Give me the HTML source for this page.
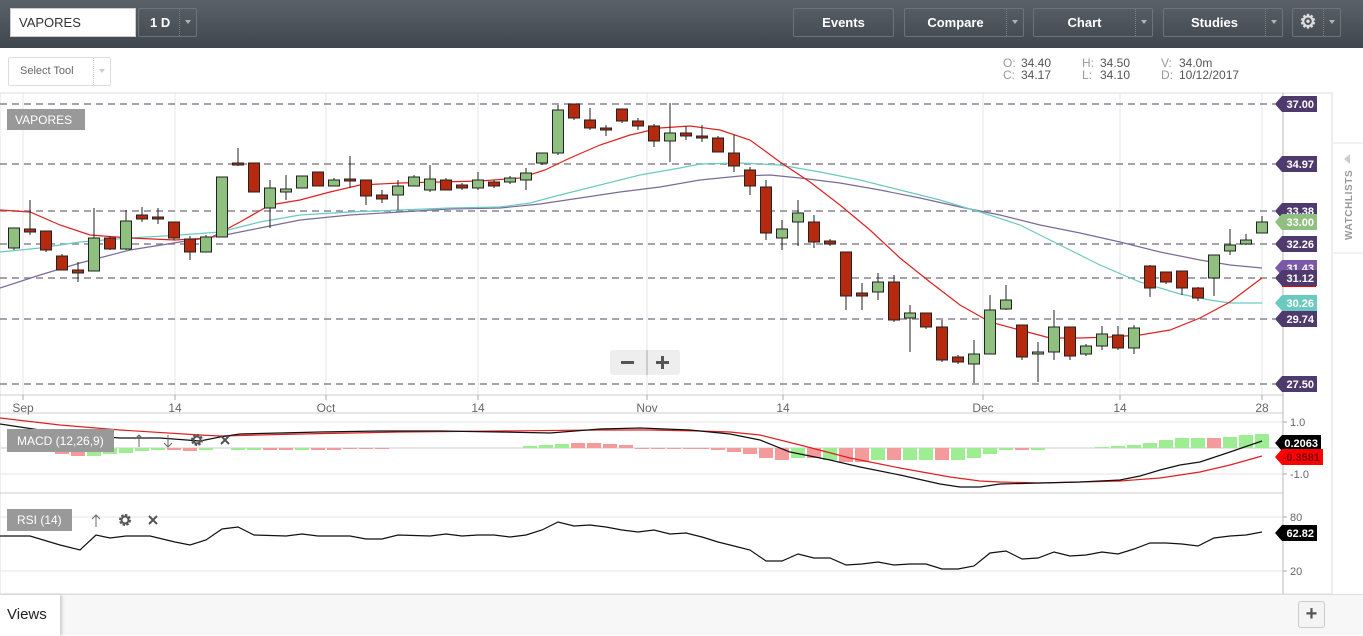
<!DOCTYPE html>
<html><head><meta charset="utf-8">
<style>
*{margin:0;padding:0;box-sizing:border-box}
body{width:1363px;height:635px;overflow:hidden;background:#fff;font-family:"Liberation Sans",sans-serif;position:relative}
.hdr{position:absolute;left:0;top:0;width:1363px;height:48px;background:linear-gradient(#5b6169,#40464d)}
.btn{position:absolute;top:8px;height:29px;border:1px solid #6d737a;border-radius:2px;color:#fff;font-weight:bold;font-size:13px;line-height:27px;text-align:center}
.btn .dd{position:absolute;right:0;top:0;width:17px;height:27px;border-left:1px dotted #7a8088}
.btn .dd:after{content:"";position:absolute;left:5px;top:11px;border-left:3px solid transparent;border-right:3px solid transparent;border-top:4px solid #b0b4b8}
.inp{position:absolute;left:10px;top:8px;width:126px;height:29px;background:#fff;border:1px solid #ccc;font-size:13px;line-height:27px;padding-left:8px;color:#333}
.sel{position:absolute;left:8px;top:57px;width:103px;height:29px;border:1px solid #ddd;border-radius:2px;font-size:11px;color:#666;line-height:27px;padding-left:11px}
.sel .dd{position:absolute;right:0;top:0;width:17px;height:27px;border-left:1px dotted #ccc}
.sel .dd:after{content:"";position:absolute;left:5px;top:11px;border-left:3px solid transparent;border-right:3px solid transparent;border-top:4px solid #ccc}
.ohlc{position:absolute;top:57px;font-size:12px;color:#555;line-height:12px}
.ohlc b{font-weight:normal;color:#999;display:inline-block;width:18px}
.views{position:absolute;left:0;top:594px;width:1363px;height:41px;background:#f7f7f7;border-top:1px solid #ddd}
.vtab{position:absolute;left:0;top:0;width:60px;height:41px;background:#fff;box-shadow:2px 0 3px #ccc;font-size:15px;line-height:40px;padding-left:7px;color:#222}
.plus{position:absolute;left:1298px;top:6px;width:27px;height:27px;border:1px solid #ccc;border-radius:3px;background:#f4f4f4;text-align:center;font-size:20px;line-height:24px;color:#555;font-weight:bold}
</style></head><body>
<div class="hdr">
<div class="inp">VAPORES</div>
<div class="btn" style="left:138px;width:59px;text-align:left;padding-left:11px">1 D<div class="dd"></div></div>
<div class="btn" style="left:793px;width:101px">Events</div>
<div class="btn" style="left:904px;width:120px;padding-right:17px">Compare<div class="dd"></div></div>
<div class="btn" style="left:1033px;width:120px;padding-right:17px">Chart<div class="dd"></div></div>
<div class="btn" style="left:1163px;width:120px;padding-right:17px">Studies<div class="dd"></div></div>
<div class="btn" style="left:1292px;width:49px;padding-right:17px;font-size:19px;color:#ddd">⚙<div class="dd"></div></div>
</div>
<div class="sel">Select Tool<div class="dd"></div></div>
<div class="ohlc" style="left:1003px"><b>O:</b>34.40<br><b>C:</b>34.17</div>
<div class="ohlc" style="left:1082px"><b>H:</b>34.50<br><b>L:</b>34.10</div>
<div class="ohlc" style="left:1161px"><b>V:</b>34.0m<br><b>D:</b>10/12/2017</div>
<svg id="c" width="1363" height="635" style="position:absolute;left:0;top:0" font-family="Liberation Sans, sans-serif"></svg>
<div class="views"><div class="vtab">Views</div><div class="plus">+</div></div>
<script>
var s='';
function P(a){return a.map(function(p){return p[0]+','+p[1]}).join(' ')}
s+='<rect x="0" y="93" width="1332" height="501" fill="#fff" stroke="#ddd"/>';
s+='<line x1="1333" y1="143" x2="1363" y2="143" stroke="#e5e5e5"/><line x1="1333" y1="253" x2="1363" y2="253" stroke="#e5e5e5"/>';
s+='<text transform="translate(1352,240) rotate(-90)" font-size="10" font-weight="bold" fill="#999" letter-spacing="0.6">WATCHLISTS</text>';
s+='<path d="M1344 159 L1350 154 L1350 164 Z" fill="#ccc"/>';
[23,175,326,478,647,783,983,1120,1262].forEach(function(x){s+='<line x1="'+x+'" y1="93" x2="'+x+'" y2="396" stroke="#e4e4e4"/>'});
[[0,395,1283],[0,413,1283],[0,422,1283],[0,474,1283],[0,493,1283],[0,517,1283],[0,571,1283]].forEach(function(l){s+='<line x1="'+l[0]+'" y1="'+l[1]+'" x2="'+l[2]+'" y2="'+l[1]+'" stroke="'+(l[1]==395||l[1]==493||l[1]==413?'#ccc':'#e6e6e6')+'"/>'});
s+='<line x1="0" y1="448" x2="1283" y2="448" stroke="#e6e6e6" stroke-width="2"/>';
s+='<line x1="1283" y1="93" x2="1283" y2="594" stroke="#bbb"/>';
[104,164,211,244,278,319,384].forEach(function(y){s+='<line x1="0" y1="'+y+'" x2="1275" y2="'+y+'" stroke="#8a8494" stroke-width="1.5" stroke-dasharray="7,5"/>'});
s+='<polyline fill="none" stroke="#7a6a9a" stroke-width="1.2" points="'+P([[0,288],[40,275],[80,263],[130,250],[180,242],[220,236],[260,228],[300,220],[350,215],[400,212],[450,209],[500,208],[540,204],[580,198],[620,192],[660,187],[700,180],[740,176],[770,175],[800,178],[840,183],[880,190],[920,198],[960,207],[1000,215],[1040,225],[1080,233],[1120,242],[1160,252],[1200,260],[1230,265],[1262,268]])+'"/>';
s+='<polyline fill="none" stroke="#6cc9c0" stroke-width="1.2" points="'+P([[0,252],[40,248],[80,242],[130,238],[180,235],[220,232],[260,222],[300,215],[350,212],[400,210],[450,208],[500,207],[530,203],[560,195],[600,185],[640,175],[680,168],[700,164],[740,163],[780,165],[820,172],[860,180],[900,190],[940,200],[980,212],[1020,225],[1060,245],[1100,265],[1140,282],[1180,294],[1210,300],[1230,303],[1262,303]])+'"/>';
s+='<polyline fill="none" stroke="#e02020" stroke-width="1.2" points="'+P([[0,210],[30,212],[60,225],[90,235],[130,238],[175,240],[210,238],[240,222],[270,205],[300,200],[330,192],[360,185],[400,183],[440,182],[480,181],[520,178],[545,170],[570,158],[600,145],[630,135],[660,128],[690,126],[720,130],[750,140],[780,162],[810,182],[840,205],[870,230],[900,258],[930,282],[960,305],[990,322],[1020,330],[1050,338],[1080,338],[1110,337],[1140,335],[1170,330],[1200,318],[1230,302],[1262,278]])+'"/>';
var C=[[14,228,248,228,250,1],[30,229,232,200,235,0],[46,231,250,231,252,0],[62,256,270,254,270,0],[78,270,273,262,282,0],[94,238,271,208,271,1],[110,238,249,236,250,0],[126,221,249,210,250,1],[142,215,219,207,222,0],[158,217,219,208,224,0],[174,222,238,222,240,0],[190,239,252,236,260,0],[206,237,252,235,252,1],[222,177,237,177,237,1],[238,163,165,148,166,0],[254,163,192,163,192,0],[270,188,208,180,228,1],[286,189,192,175,200,1],[302,176,188,176,188,1],[318,172,186,172,186,0],[334,180,186,178,186,1],[350,179,181,156,188,0],[366,180,196,180,205,0],[382,195,199,190,203,0],[398,186,195,180,210,1],[414,177,186,175,186,1],[430,179,190,165,192,1],[446,180,190,178,190,0],[462,185,188,183,190,0],[478,180,188,172,190,1],[494,182,186,180,188,0],[510,178,182,176,184,1],[526,173,180,168,190,1],[542,153,163,153,165,1],[558,110,153,105,155,1],[574,104,118,104,120,0],[590,120,128,108,130,0],[606,128,129,125,136,0],[622,109,121,109,123,0],[638,121,126,118,130,0],[654,126,141,124,147,0],[670,133,141,103,162,1],[686,133,136,126,140,0],[702,136,138,125,142,0],[718,138,152,136,152,0],[734,153,166,135,172,0],[750,170,186,167,195,0],[766,187,233,180,240,0],[782,229,238,220,250,1],[798,213,222,200,246,1],[814,222,242,215,248,0],[830,241,244,239,246,0],[846,252,296,252,310,0],[862,293,296,283,310,0],[878,282,292,273,300,1],[894,282,320,275,322,0],[910,313,318,305,352,1],[926,313,327,313,329,0],[942,327,360,320,362,0],[958,357,362,355,364,0],[974,354,364,340,383,1],[990,310,354,295,354,1],[1006,300,309,285,310,1],[1022,325,357,325,360,0],[1038,352,354,342,382,1],[1054,327,352,310,360,1],[1070,327,356,327,360,0],[1086,346,354,344,356,1],[1102,334,346,326,350,1],[1118,335,348,326,350,0],[1134,328,348,325,354,1],[1150,266,288,265,297,0],[1166,272,282,272,284,0],[1182,271,288,271,295,0],[1198,288,298,287,301,0],[1214,255,278,255,296,1],[1230,245,251,229,255,1],[1246,240,244,234,245,1],[1262,222,233,216,233,1]];
C.forEach(function(c){s+='<line x1="'+c[0]+'" y1="'+c[3]+'" x2="'+c[0]+'" y2="'+c[4]+'" stroke="#222"/>';s+='<rect x="'+(c[0]-5.5)+'" y="'+c[1]+'" width="11" height="'+Math.max(2,c[2]-c[1])+'" fill="'+(c[5]?'#8fc07f':'#b52a0e')+'" stroke="#222"/>'});
var H=[[30,-1,0],[46,-4,0],[62,-6,0],[78,-8,0],[94,-8,1],[110,-6,1],[126,-5,1],[142,-3,1],[158,-2,1],[174,-2,0],[190,-3,0],[206,-2,1],[238,-2,1],[254,-2,1],[270,-2,0],[286,-2,0],[302,-2,1],[318,-2,0],[334,-2,0],[350,-1,0],[366,-1,0],[382,-1,0],[530,2,1],[546,3,1],[562,4,1],[578,5,0],[594,5,0],[610,4,0],[626,3,0],[642,-1,0],[658,-1,0],[674,-1,0],[690,-1,0],[702,-1,0],[718,-2,0],[734,-4,0],[750,-6,0],[766,-10,0],[782,-12,0],[798,-10,1],[814,-10,0],[830,-12,1],[846,-14,0],[862,-14,0],[878,-12,1],[894,-12,0],[910,-12,1],[926,-12,1],[942,-12,0],[958,-12,1],[974,-10,1],[990,-6,1],[1006,-2,1],[1022,-2,0],[1038,-2,1],[1102,1,1],[1118,2,1],[1134,3,1],[1150,5,1],[1166,8,1],[1182,10,1],[1198,10,1],[1214,10,0],[1230,11,1],[1246,13,1],[1262,14,1]];
H.forEach(function(h){var y=h[1]>0?448-h[1]:448;s+='<rect x="'+(h[0]-7)+'" y="'+y+'" width="14" height="'+Math.abs(h[1])+'" fill="'+(h[2]?'#9ded93':'#f59a9a')+'"/>'});
s+='<polyline fill="none" stroke="#e02020" stroke-width="1.2" points="'+P([[0,418],[60,425],[120,430],[200,435],[220,436],[300,434],[400,432],[500,431],[600,430],[650,430],[700,431],[730,432],[760,435],[800,445],[850,458],[900,468],[950,477],[980,481],[1000,482],[1040,483],[1080,482],[1120,481],[1160,478],[1200,472],[1230,465],[1262,456]])+'"/>';
s+='<polyline fill="none" stroke="#111" stroke-width="1.2" points="'+P([[0,424],[40,430],[80,435],[120,438],[160,438],[200,441],[220,437],[240,434],[280,433],[320,432],[380,431],[440,431],[500,432],[550,433],[600,429],[640,428],[690,430],[730,434],[760,440],[790,452],[830,460],[860,467],[900,475],[940,484],[960,487],[980,487],[1000,484],[1040,483],[1080,482],[1100,481],[1120,480],[1140,476],[1160,470],[1180,465],[1200,462],[1230,452],[1262,441]])+'"/>';
s+='<polyline fill="none" stroke="#111" stroke-width="1.2" points="'+P([[0,536],[30,536],[60,545],[80,550],[96,535],[110,538],[126,536],[150,536],[175,542],[190,545],[206,540],[222,529],[238,527],[254,535],[286,536],[302,534],[318,536],[334,536],[350,536],[366,539],[382,539],[398,535],[430,536],[446,534],[462,536],[478,535],[494,535],[510,537],[526,535],[542,530],[558,522],[574,526],[590,525],[606,527],[622,530],[638,532],[654,530],[670,534],[686,533],[702,537],[718,542],[734,546],[750,550],[766,561],[782,561],[798,554],[814,558],[830,558],[846,565],[862,564],[878,562],[894,565],[910,564],[926,564],[942,569],[958,569],[974,566],[990,553],[1006,551],[1022,559],[1038,558],[1054,552],[1070,556],[1086,555],[1102,552],[1118,554],[1134,549],[1150,543],[1166,543],[1182,544],[1198,546],[1214,538],[1230,536],[1246,535],[1262,532]])+'"/>';
[[23,'Sep'],[175,'14'],[326,'Oct'],[478,'14'],[647,'Nov'],[783,'14'],[983,'Dec'],[1120,'14'],[1262,'28']].forEach(function(d){s+='<line x1="'+d[0]+'" y1="395" x2="'+d[0]+'" y2="400" stroke="#aaa"/><text x="'+d[0]+'" y="412" font-size="12" fill="#666" text-anchor="middle">'+d[1]+'</text>'});
[[422,'1.0'],[474,'-1.0'],[517,'80'],[571,'20']].forEach(function(t){s+='<line x1="1283" y1="'+t[0]+'" x2="1287" y2="'+t[0]+'" stroke="#aaa"/><text x="1290" y="'+(t[0]+4)+'" font-size="11" fill="#666">'+t[1]+'</text>'});
function L(y,t,bg,fg,w){w=w||42;s+='<path d="M1275 '+y+' L1282 '+(y-8)+' L'+(1275+w)+' '+(y-8)+' L'+(1275+w)+' '+(y+8)+' L1282 '+(y+8)+' Z" fill="'+bg+'"/><text x="'+(1275+w-3)+'" y="'+(y+4)+'" font-size="11" font-weight="bold" fill="'+(fg||'#fff')+'" text-anchor="end">'+t+'</text>'}
L(104,'37.00','#4f3a6d');L(164,'34.97','#4f3a6d');L(211,'33.38','#4f3a6d');L(222,'33.00','#8fc07f');L(244,'32.26','#4f3a6d');L(268,'31.43','#7a5aa8');
s+='<rect x="1282" y="283" width="34" height="4" fill="#e00"/>';L(278,'31.12','#4f3a6d');L(303,'30.26','#6cc9c0');L(319,'29.74','#4f3a6d');L(384,'27.50','#4f3a6d');
L(443,'0.2063','#000','#fff',46);L(457,'-0.3581','#f00','#700',48);L(533,'62.82','#000','#fff',42);
s+='<rect x="7" y="109" width="78" height="21" fill="#999"/><text x="15" y="124" font-size="12" fill="#fff">VAPORES</text>';
s+='<rect x="7" y="429" width="107" height="23" fill="#999"/><text x="17" y="445" font-size="12" fill="#fff">MACD (12,26,9)</text>';
s+='<rect x="7" y="509" width="65" height="22" fill="#999"/><text x="17" y="524" font-size="12" fill="#fff">RSI (14)</text>';
function icons(x,y,down){s+='<path d="M'+x+' '+(y+7)+' V'+(y-5)+' M'+(x-4)+' '+(y-1)+' L'+x+' '+(y-5)+' L'+(x+4)+' '+(y-1)+'" stroke="#666" fill="none"/>';
var gx=down?x+58:x+29;if(down){s+='<path d="M'+(x+29)+' '+(y-5)+' V'+(y+7)+' M'+(x+25)+' '+(y+3)+' L'+(x+29)+' '+(y+7)+' L'+(x+33)+' '+(y+3)+'" stroke="#666" fill="none"/>'}
s+='<circle cx="'+gx+'" cy="'+y+'" r="4.5" fill="none" stroke="#555" stroke-width="3" stroke-dasharray="2.2,1.3"/><circle cx="'+gx+'" cy="'+y+'" r="3.5" fill="none" stroke="#555" stroke-width="2"/>';
var xx=gx+28;s+='<path d="M'+(xx-4)+' '+(y-4)+' L'+(xx+4)+' '+(y+4)+' M'+(xx+4)+' '+(y-4)+' L'+(xx-4)+' '+(y+4)+'" stroke="#555" stroke-width="2"/>'}
icons(139,440,1);icons(96,520,0);
s+='<rect x="610" y="350" width="70" height="25" rx="3" fill="#eee"/><line x1="647" y1="350" x2="647" y2="375" stroke="#aaa"/><rect x="621" y="361" width="13" height="3" fill="#555"/><rect x="656" y="361" width="13" height="3" fill="#555"/><rect x="661" y="356" width="3" height="13" fill="#555"/>';
document.getElementById('c').innerHTML=s;
</script>
</body></html>
